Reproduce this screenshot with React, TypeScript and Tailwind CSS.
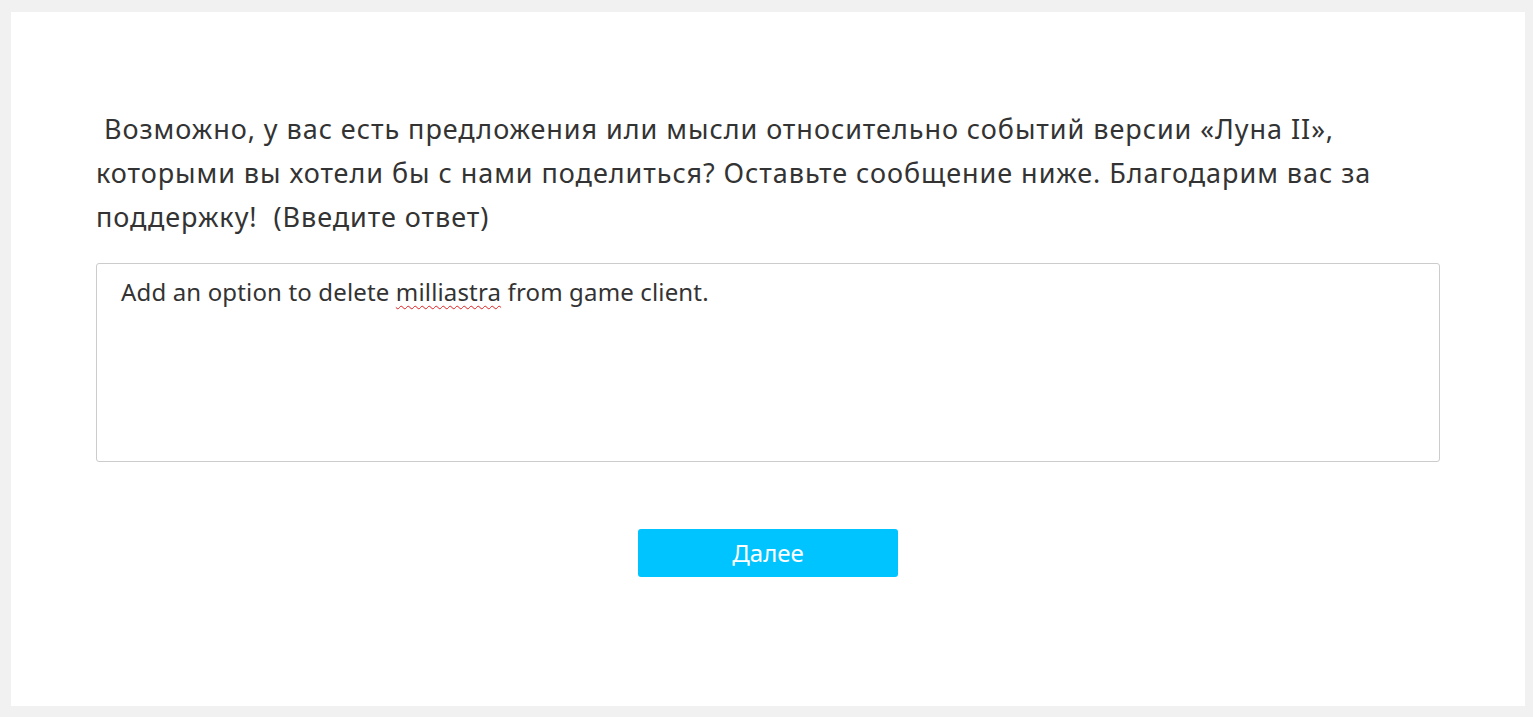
import React from "react";

export default function App() {
  return (
    <div className="min-h-[717px] w-full bg-[#f1f1f1] pt-[12px] pb-[11px] pl-[11px] pr-[8px]" style={{ fontFamily: '"Noto Sans", "Open Sans", sans-serif' }}>
      <div className="bg-white h-[694px] flex flex-col pt-[95px] px-[85px]">
        <p className="text-[27px] leading-[44px] text-[#333333] tracking-[0.95px]">
          &nbsp;Возможно, у вас есть предложения или мысли относительно событий версии «Луна II»,
          <br />
          которыми вы хотели бы с нами поделиться? Оставьте сообщение ниже. Благодарим вас за
          <br />
          поддержку!&nbsp; (Введите ответ)
        </p>
        <div className="mt-[24px] h-[199px] border border-[#cccccc] rounded-[3px] pl-[24px] pt-[13px] text-[24px] leading-[30px] text-[#333333] tracking-[0.15px]">
          Add an option to delete{" "}
          <span className="underline decoration-wavy decoration-[#e02020] decoration-1 underline-offset-[4px]">milliastra</span>{" "}
          from game client.
        </div>
        <div className="flex justify-center mt-[67px]">
          <button className="w-[260px] h-[48px] bg-[#00c4ff] rounded-[3px] text-white text-[24px]">Далее</button>
        </div>
      </div>
    </div>
  );
}
